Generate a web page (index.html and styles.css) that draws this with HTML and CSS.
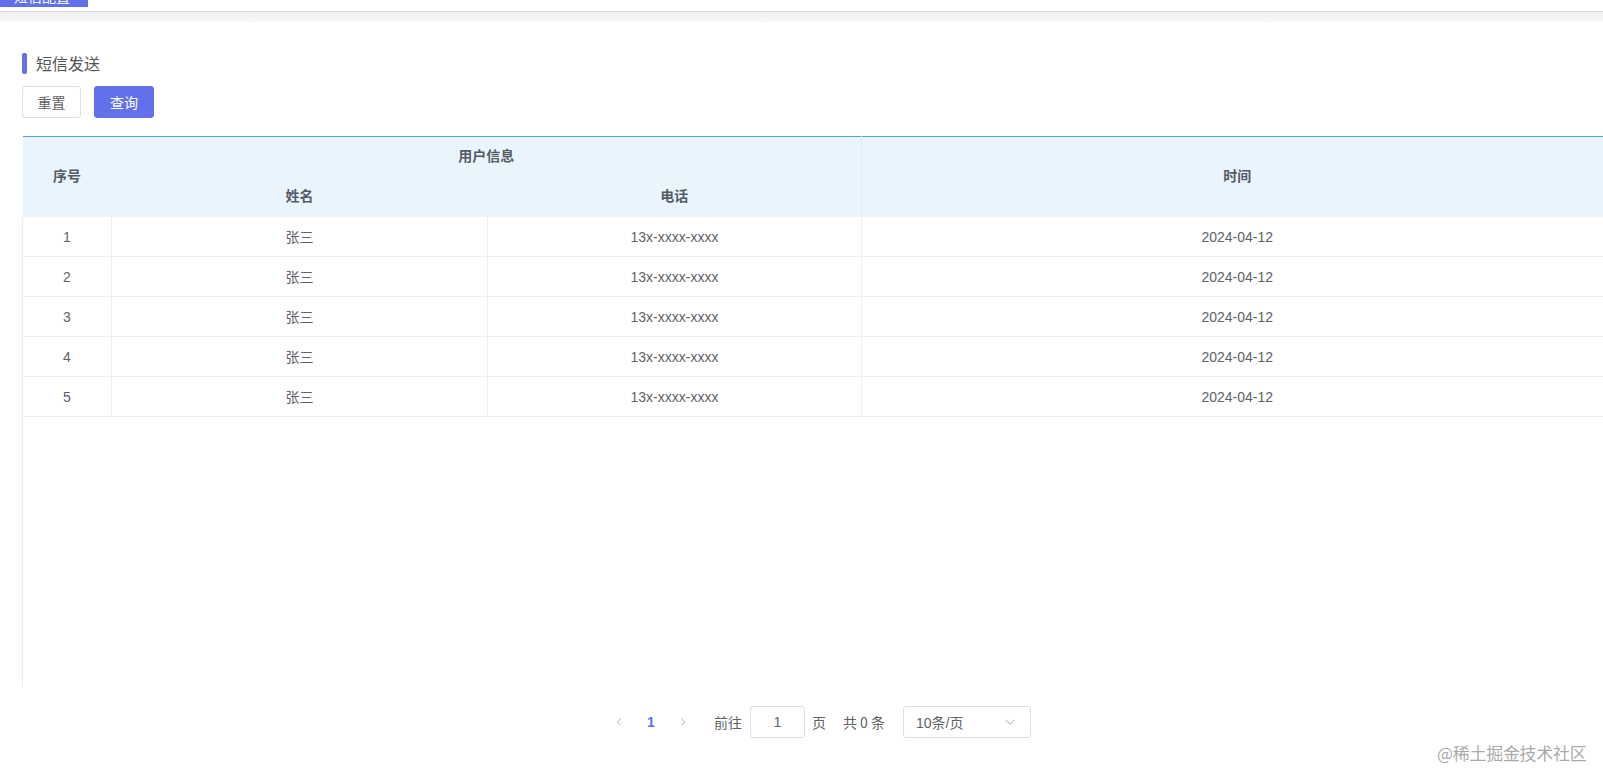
FILE: index.html
```html
<!DOCTYPE html>
<html lang="zh-CN">
<head>
<meta charset="utf-8">
<title>短信发送</title>
<link rel="stylesheet" href="styles.css">
</head>
<body>
<div class="topbar">
  <div class="tab"><span class="tab-text">短信配置</span></div>
</div>
<div class="band"></div>
<main class="main">
  <div class="title"><span class="title-bar"></span><span class="title-text">短信发送</span></div>
  <div class="actions">
    <button class="btn">重置</button>
    <button class="btn btn-primary">查询</button>
  </div>
  <div class="table-wrap">
    <table class="grid">
      <colgroup>
        <col class="c-idx"><col class="c-name"><col class="c-phone"><col class="c-time">
      </colgroup>
      <thead>
        <tr>
          <th rowspan="2" class="th-span">序号</th>
          <th colspan="2" class="th-b2">用户信息</th>
          <th rowspan="2" class="th-span">时间</th>
        </tr>
        <tr>
          <th>姓名</th>
          <th class="th-b2">电话</th>
        </tr>
      </thead>
      <tbody>
        <tr><td>1</td><td>张三</td><td>13x-xxxx-xxxx</td><td class="td-last">2024-04-12</td></tr>
        <tr><td>2</td><td>张三</td><td>13x-xxxx-xxxx</td><td class="td-last">2024-04-12</td></tr>
        <tr><td>3</td><td>张三</td><td>13x-xxxx-xxxx</td><td class="td-last">2024-04-12</td></tr>
        <tr><td>4</td><td>张三</td><td>13x-xxxx-xxxx</td><td class="td-last">2024-04-12</td></tr>
        <tr><td>5</td><td>张三</td><td>13x-xxxx-xxxx</td><td class="td-last">2024-04-12</td></tr>
      </tbody>
    </table>
    <div class="empty"></div>
    <div class="pager">
      <span class="pg-btn pg-arrow">
        <svg width="8" height="10" viewBox="0 0 8 10"><path d="M5.5 1.5 L2.5 5 L5.5 8.5" fill="none" stroke="#c0c4cc" stroke-width="1.1"/></svg>
      </span>
      <span class="pg-btn pg-num">1</span>
      <span class="pg-btn pg-arrow">
        <svg width="8" height="10" viewBox="0 0 8 10"><path d="M2.5 1.5 L5.5 5 L2.5 8.5" fill="none" stroke="#c0c4cc" stroke-width="1.1"/></svg>
      </span>
      <span class="pg-text pg-goto">前往</span>
      <span class="pg-input">1</span>
      <span class="pg-text pg-page">页</span>
      <span class="pg-text pg-total">共 0 条</span>
      <span class="pg-select"><span>10条/页</span>
        <svg class="pg-chev" width="12" height="8" viewBox="0 0 12 8"><path d="M1.5 1.8 L6 6 L10.5 1.8" fill="none" stroke="#c0c4cc" stroke-width="1.1"/></svg>
      </span>
    </div>
  </div>
</main>
<div class="watermark">@稀土掘金技术社区</div>
</body>
</html>
```
FILE: styles.css
```css
html, body {
  margin: 0;
  padding: 0;
  background: #fff;
  overflow: hidden;
}
body {
  font-family: "Liberation Sans", "Noto Sans CJK SC", sans-serif;
  color: #606266;
  font-size: 14px;
  width: 1603px;
  height: 770px;
  position: relative;
}
.topbar {
  height: 11px;
  border-bottom: 1px solid #d6d6d6;
  background: #fff;
}
.tab {
  width: 88px;
  height: 7px;
  background: #6470ea;
  overflow: hidden;
}
.tab-text {
  display: block;
  color: #fff;
  font-size: 14px;
  line-height: 14px;
  margin-top: -10px;
  padding-left: 14px;
}
.band {
  height: 10px;
  background: linear-gradient(#f0f0f0, #f8f8f8);
}
.main {
  padding-left: 22px;
}
.title {
  display: flex;
  align-items: center;
  margin-top: 31px;
  height: 21px;
}
.title-bar {
  width: 5px;
  height: 21px;
  border-radius: 2px;
  background: #6470ea;
}
.title-text {
  margin-left: 9px;
  font-size: 16px;
  color: #555;
  font-family: "Noto Sans CJK SC", sans-serif;
  line-height: 21px;
}
.actions {
  display: flex;
  gap: 12px;
  margin-top: 12px;
}
.btn {
  width: 59px;
  height: 32px;
  border: 1px solid #dcdfe6;
  border-radius: 3px;
  background: #fff;
  color: #606266;
  font-size: 14px;
  font-family: "Noto Sans CJK SC", sans-serif;
  padding: 0;
  cursor: pointer;
}
.btn-primary {
  width: 60px;
  margin-left: 1px;
  background: #6470ea;
  border-color: #6470ea;
  color: #fff;
}
.table-wrap {
  width: 1590px;
  margin-top: 18px;
}
.grid {
  width: 1590px;
  border-collapse: collapse;
  table-layout: fixed;
  border-top: 1px solid #5a9fd8;
}
.c-idx { width: 89px; }
.c-name { width: 376px; }
.c-phone { width: 374px; }
.c-time { width: 751px; }
th {
  background: #eaf4fd;
  font-weight: bold;
  color: #555b66;
  height: 36px;
  padding: 0 0 4px 0;
  font-family: "Noto Sans CJK SC", sans-serif;
  font-size: 14px;
  line-height: 20px;
  text-align: center;
  vertical-align: middle;
}
.th-span { padding-bottom: 4px; }
.th-b2 { border-right: 1px solid #e0ecf7; }
td {
  height: 39px;
  padding: 0;
  text-align: center;
  border-bottom: 1px solid #ebeef5;
  border-right: 1px solid #ebeef5;
  font-size: 14px;
  line-height: 20px;
  color: #606266;
}
td:first-child { border-left: 1px solid #ebeef5; }
.td-last { border-right: none; }
.empty {
  height: 270px;
  border-left: 1px solid #ebeef5;
}
.pager {
  display: flex;
  justify-content: center;
  align-items: center;
  margin-top: 19px;
  height: 32px;
}
.pg-btn {
  width: 32px;
  height: 32px;
  display: flex;
  align-items: center;
  justify-content: center;
}
.pg-num {
  color: #6470ea;
  font-weight: bold;
  font-size: 14px;
}
.pg-text {
  font-family: "Noto Sans CJK SC", sans-serif;
  font-size: 14px;
  color: #606266;
}
.pg-goto { margin-left: 15px; }
.pg-input {
  margin-left: 8px;
  width: 53px;
  height: 30px;
  border: 1px solid #dcdfe6;
  border-radius: 3px;
  display: flex;
  align-items: center;
  justify-content: center;
  font-size: 14px;
}
.pg-page { margin-left: 7px; }
.pg-total { margin-left: 17px; }
.pg-select {
  margin-left: 18px;
  border: 1px solid #dcdfe6;
  border-radius: 3px;
  display: flex;
  align-items: center;
  justify-content: space-between;
  padding: 0 14px 0 12px;
  box-sizing: border-box;
  width: 128px;
  height: 32px;
  font-size: 14px;
  font-family: "Liberation Sans", "Noto Sans CJK SC", sans-serif;
}
.watermark {
  position: absolute;
  left: 1437px;
  top: 741px;
  font-size: 17px;
  line-height: 24px;
  color: rgba(140, 140, 140, 0.75);
  font-family: "Noto Sans CJK SC", sans-serif;
  letter-spacing: -0.3px;
}
```
